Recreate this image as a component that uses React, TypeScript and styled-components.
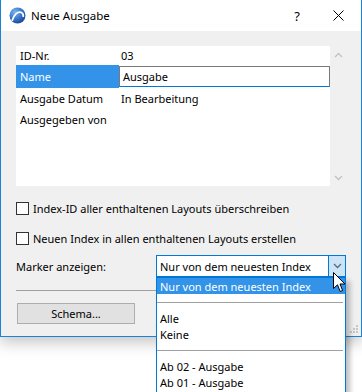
import * as React from "react";
import styled, {createGlobalStyle} from "styled-components";

const GlobalStyle = createGlobalStyle`
    html, body {
        margin: 0;
        padding: 0;
        background: #ffffff;
    }
    body {
        font-family: "Noto Sans", "Open Sans", sans-serif;
        font-size: 11px;
        color: #000000;
    }
`;

const Page = styled.div`
    position: relative;
    width: 362px;
    height: 392px;
    overflow: hidden;
    background: #ffffff;
`;

const Dialog = styled.div`
    width: 360px;
    height: 336px;
    display: flex;
    flex-direction: column;
    border: 1px solid #1883d7;
    border-top: none;
    background: #f0f0f0;
    box-shadow: 0 6px 14px rgba(0, 0, 0, 0.22);
`;

const TitleBar = styled.div`
    height: 31px;
    display: flex;
    align-items: center;
    background: #ffffff;
    padding-left: 8px;
`;

const Title = styled.span`
    margin-left: 5px;
    font-size: 11.5px;
    flex: 1;
`;

const TitleButton = styled.div<{$w: number}>`
    width: ${(p) => p.$w}px;
    height: 31px;
    display: flex;
    align-items: center;
    justify-content: center;
    font-size: 13px;
`;

const Body = styled.div`
    position: relative;
    flex: 1;
    display: flex;
    flex-direction: column;
    padding: 15px 15px 0 15px;
`;

const ListBox = styled.div`
    height: 140px;
    display: flex;
`;

const ListArea = styled.div`
    flex: 1;
    background: #ffffff;
    display: flex;
    flex-direction: column;
`;

const ScrollBar = styled.div`
    width: 16px;
    display: flex;
    flex-direction: column;
    justify-content: space-between;
    align-items: center;
    padding: 6px 0 5px;
`;

const Row = styled.div<{$h: number}>`
    height: ${(p) => p.$h}px;
    display: grid;
    grid-template-columns: 103px 1fr;
    align-items: center;
`;

const Label = styled.div<{$selected?: boolean}>`
    height: 100%;
    display: flex;
    align-items: center;
    padding-left: 4px;
    background: ${(p) => (p.$selected ? "#3393e9" : "transparent")};
    color: ${(p) => (p.$selected ? "#ffffff" : "#000000")};
`;

const Value = styled.div`
    padding-left: 2px;
`;

const NameInput = styled.div`
    height: 19px;
    display: flex;
    align-items: center;
    padding-left: 3px;
    border: 1px solid #7a7a7a;
    border-bottom: 1px solid #0078d7;
    background: #ffffff;
`;

const CheckRow = styled.label<{$top: number}>`
    margin-top: ${(p) => p.$top}px;
    height: 13px;
    display: flex;
    align-items: center;
    gap: 4px;
`;

const CheckBox = styled.span`
    width: 11px;
    height: 11px;
    border: 1px solid #333333;
    background: #ffffff;
`;

const MarkerRow = styled.div`
    margin-top: 10px;
    display: flex;
    align-items: center;
    justify-content: space-between;
`;

const Combo = styled.div`
    width: 188px;
    height: 20px;
    display: flex;
    border: 1px solid #0078d7;
    background: #ffffff;
`;

const ComboText = styled.div`
    flex: 1;
    display: flex;
    align-items: center;
    padding-left: 3px;
`;

const ComboButton = styled.div`
    width: 16px;
    display: flex;
    align-items: center;
    justify-content: center;
    background: #cce4f7;
    border-left: 1px solid #0078d7;
`;

const Divider = styled.div`
    margin-top: 13px;
    height: 1px;
    background: #a0a0a0;
`;

const Button = styled.div`
    margin-top: 12px;
    margin-left: 1px;
    width: 116px;
    height: 19px;
    display: flex;
    align-items: center;
    justify-content: center;
    background: #e1e1e1;
    border: 1px solid #adadad;
`;

const Grip = styled.svg`
    position: absolute;
    right: 2px;
    bottom: 2px;
`;

const DropList = styled.div`
    position: absolute;
    left: 156px;
    top: 277px;
    width: 188px;
    height: 114px;
    border: 1px solid #0078d7;
    background: #ffffff;
    box-shadow: 4px 4px 5px rgba(0, 0, 0, 0.25);
`;

const DropItem = styled.div<{$active?: boolean}>`
    height: 16px;
    display: flex;
    align-items: center;
    padding-left: 3px;
    background: ${(p) => (p.$active ? "#3393e9" : "transparent")};
    color: ${(p) => (p.$active ? "#ffffff" : "#000000")};
`;

const DropSeparator = styled.div`
    height: 16px;
    display: flex;
    align-items: center;
    &::after {
        content: "";
        flex: 1;
        margin-right: 2px;
        height: 1px;
        background: #a0a0a0;
    }
`;

const Cursor = styled.svg`
    position: absolute;
    left: 333px;
    top: 272px;
`;

const AppIcon = () => (
    <svg width="17" height="17" viewBox="0 0 17 17">
        <defs>
            <radialGradient id="ball" cx="0.35" cy="0.3" r="0.8">
                <stop offset="0" stopColor="#7fb6ee" />
                <stop offset="0.6" stopColor="#2f6fc4" />
                <stop offset="1" stopColor="#1a3f86" />
            </radialGradient>
        </defs>
        <circle cx="8.5" cy="8.5" r="8" fill="url(#ball)" />
        <path d="M3 14 C5 7 9 4 12.5 5.5 C14 6.3 14.5 8 14.2 10" stroke="#ffffff" strokeWidth="1.8" fill="none" />
    </svg>
);

const Chevron = ({up, color}: {up?: boolean; color: string}) => (
    <svg width="9" height="6" viewBox="0 0 9 6">
        <path d={up ? "M1 5 L4.5 1.5 L8 5" : "M1 1 L4.5 4.5 L8 1"} stroke={color} strokeWidth="1.3" fill="none" />
    </svg>
);

export default function App() {
    return (
        <Page>
            <GlobalStyle />
            <Dialog>
                <TitleBar>
                    <AppIcon />
                    <Title>Neue Ausgabe</Title>
                    <TitleButton $w={36}>?</TitleButton>
                    <TitleButton $w={46}>
                        <svg width="11" height="11" viewBox="0 0 11 11">
                            <path d="M0.5 0.5 L10.5 10.5 M10.5 0.5 L0.5 10.5" stroke="#000" strokeWidth="1" />
                        </svg>
                    </TitleButton>
                </TitleBar>
                <Body>
                    <ListBox>
                        <ListArea>
                            <Row $h={19}>
                                <Label>ID-Nr.</Label>
                                <Value>03</Value>
                            </Row>
                            <Row $h={23}>
                                <Label $selected>Name</Label>
                                <NameInput>Ausgabe</NameInput>
                            </Row>
                            <Row $h={21}>
                                <Label>Ausgabe Datum</Label>
                                <Value>In Bearbeitung</Value>
                            </Row>
                            <Row $h={21}>
                                <Label>Ausgegeben von</Label>
                                <Value />
                            </Row>
                        </ListArea>
                        <ScrollBar>
                            <Chevron up color="#c2c2c2" />
                            <Chevron color="#c2c2c2" />
                        </ScrollBar>
                    </ListBox>

                    <CheckRow $top={16}>
                        <CheckBox />
                        Index-ID aller enthaltenen Layouts überschreiben
                    </CheckRow>
                    <CheckRow $top={17}>
                        <CheckBox />
                        Neuen Index in allen enthaltenen Layouts erstellen
                    </CheckRow>

                    <MarkerRow>
                        <span>Marker anzeigen:</span>
                        <Combo>
                            <ComboText>Nur von dem neuesten Index</ComboText>
                            <ComboButton>
                                <Chevron color="#5a6a7a" />
                            </ComboButton>
                        </Combo>
                    </MarkerRow>

                    <Divider />
                    <Button>Schema...</Button>

                    <Grip width="10" height="10" viewBox="0 0 10 10">
                        <rect x="7" y="1" width="2" height="2" fill="#c8c8c8" />
                        <rect x="4" y="4" width="2" height="2" fill="#c8c8c8" />
                        <rect x="7" y="4" width="2" height="2" fill="#c8c8c8" />
                        <rect x="1" y="7" width="2" height="2" fill="#c8c8c8" />
                        <rect x="4" y="7" width="2" height="2" fill="#c8c8c8" />
                        <rect x="7" y="7" width="2" height="2" fill="#c8c8c8" />
                    </Grip>
                </Body>
            </Dialog>

            <DropList>
                <DropItem $active>Nur von dem neuesten Index</DropItem>
                <DropSeparator />
                <DropItem>Alle</DropItem>
                <DropItem>Keine</DropItem>
                <DropSeparator />
                <DropItem>Ab 02 - Ausgabe</DropItem>
                <DropItem>Ab 01 - Ausgabe</DropItem>
            </DropList>

            <Cursor width="13" height="21" viewBox="0 0 13 21">
                <path
                    d="M0.5 0.5 L0.5 16.5 L4.5 12.8 L7.2 19.5 L9.6 18.5 L7 12 L12 12 Z"
                    fill="#ffffff"
                    stroke="#000000"
                    strokeWidth="1"
                    strokeLinejoin="round"
                />
            </Cursor>
        </Page>
    );
}
